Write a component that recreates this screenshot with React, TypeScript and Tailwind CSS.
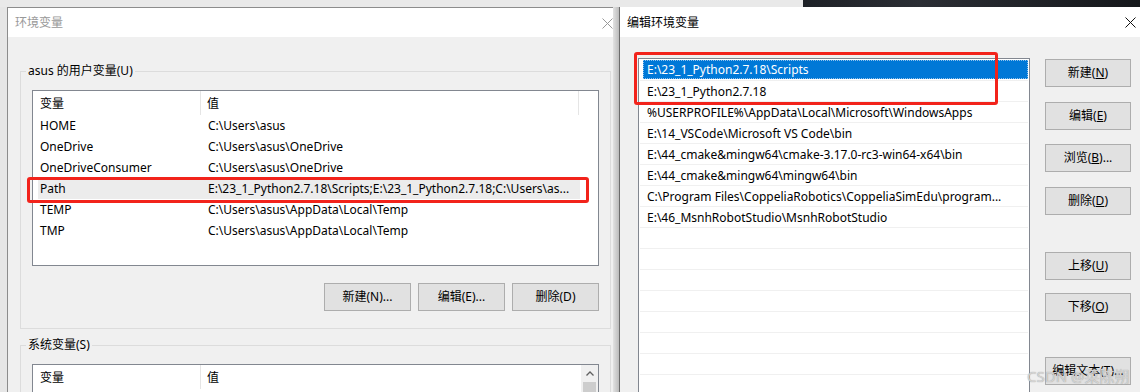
import type { ReactNode } from "react"

const userVars = [
  { name: "HOME", value: "C:\\Users\\asus" },
  { name: "OneDrive", value: "C:\\Users\\asus\\OneDrive" },
  { name: "OneDriveConsumer", value: "C:\\Users\\asus\\OneDrive" },
  { name: "Path", value: "E:\\23_1_Python2.7.18\\Scripts;E:\\23_1_Python2.7.18;C:\\Users\\as...", active: true },
  { name: "TEMP", value: "C:\\Users\\asus\\AppData\\Local\\Temp" },
  { name: "TMP", value: "C:\\Users\\asus\\AppData\\Local\\Temp" },
]

const pathEntries = [
  "E:\\23_1_Python2.7.18\\Scripts",
  "E:\\23_1_Python2.7.18",
  "%USERPROFILE%\\AppData\\Local\\Microsoft\\WindowsApps",
  "E:\\14_VSCode\\Microsoft VS Code\\bin",
  "E:\\44_cmake&mingw64\\cmake-3.17.0-rc3-win64-x64\\bin",
  "E:\\44_cmake&mingw64\\mingw64\\bin",
  "C:\\Program Files\\CoppeliaRobotics\\CoppeliaSimEdu\\program...",
  "E:\\46_MsnhRobotStudio\\MsnhRobotStudio",
  "", "", "", "", "", "", "", "", "",
]

function CloseX({ color }: { color: string }) {
  return (
    <svg width="11" height="11" viewBox="0 0 11 11">
      <path d="M0.5 0.5L10.5 10.5M10.5 0.5L0.5 10.5" stroke={color} strokeWidth="1" />
    </svg>
  )
}

function Btn({ children, className = "" }: { children: ReactNode; className?: string }) {
  return (
    <button
      className={`flex h-[28px] shrink-0 items-center justify-center border border-[#adadad] bg-[#e1e1e1] text-[12px] text-black ${className}`}
    >
      {children}
    </button>
  )
}

function GroupLabel({ children }: { children: ReactNode }) {
  return (
    <span className="absolute left-[5px] top-[-9px] bg-[#f0f0f0] px-[2px] leading-[16px]">
      {children}
    </span>
  )
}

export default function App() {
  return (
    <div className="relative h-[392px] w-[1140px] overflow-hidden bg-[linear-gradient(to_right,#e9e9e9_803px,#1e2127_803px,#2b2e34_920px,#15171b_1140px)] font-['Noto_Sans','Noto_Sans_CJK_SC',sans-serif] text-[12px] leading-none text-black">
      <div className="flex h-full pt-[7px]">
        <div className="w-[7px] shrink-0 bg-[#e6e6e6]" />

        {/* 环境变量 */}
        <div className="flex w-[606px] shrink-0 flex-col overflow-hidden border-l border-t border-[#8c8c8c]">
          <div className="flex h-[29px] shrink-0 items-center justify-between bg-white pl-[7px] pt-[1px]">
            <span className="text-[#999999]">环境变量</span>
            <CloseX color="#999999" />
          </div>
          <div className="flex-1 bg-[#f0f0f0] pl-[12px] pt-[34px]">
            <div className="relative h-[258px] w-[591px] border border-[#dcdcdc] pl-[11px] pt-[18px]">
              <GroupLabel>asus 的用户变量(U)</GroupLabel>
              <div className="h-[176px] w-[567px] border border-[#828790] bg-white">
                <div className="flex h-[24px]">
                  <div className="flex w-[168px] items-center border-r border-[#e5e5e5] pl-[7px] pt-[2px]">变量</div>
                  <div className="flex w-[378px] items-center border-r border-[#e5e5e5] pl-[6px] pt-[2px]">值</div>
                </div>
                <div className="ml-[5px] w-[542px]">
                  {userVars.map((v) => (
                    <div
                      key={v.name}
                      className={`flex h-[21px] items-center whitespace-nowrap pt-[1px] ${v.active ? "bg-[#ececec]" : ""}`}
                    >
                      <div className="w-[163px] pl-[2px]">{v.name}</div>
                      <div className="pl-[7px]">{v.value}</div>
                    </div>
                  ))}
                </div>
              </div>
              <div className="mt-[17px] flex w-[567px] justify-end gap-[7px]">
                <Btn className="w-[87px]">新建(N)...</Btn>
                <Btn className="w-[87px]">编辑(E)...</Btn>
                <Btn className="w-[87px]">删除(D)</Btn>
              </div>
            </div>

            <div className="relative mt-[16px] h-[200px] w-[591px] border border-[#dcdcdc] pl-[11px] pt-[18px]">
              <GroupLabel>系统变量(S)</GroupLabel>
              <div className="flex h-[120px] w-[567px] border border-[#828790] bg-white">
                <div className="flex h-[24px] flex-1">
                  <div className="flex w-[168px] items-center border-r border-[#e5e5e5] pl-[7px] pt-[2px]">变量</div>
                  <div className="flex items-center pl-[6px] pt-[2px]">值</div>
                </div>
                <div className="flex w-[17px] flex-col bg-[#f0f0f0]">
                  <div className="flex h-[17px] items-center justify-center">
                    <svg width="8" height="5" viewBox="0 0 8 5">
                      <path d="M0.5 4.5L4 1L7.5 4.5" fill="none" stroke="#606060" strokeWidth="1.3" />
                    </svg>
                  </div>
                  <div className="mx-[2px] flex-1 bg-[#cdcdcd]" />
                </div>
              </div>
            </div>
          </div>
        </div>

        <div className="w-[6px] shrink-0 bg-gradient-to-r from-[#e2e2e2] to-[#bcbcbc]" />

        {/* 编辑环境变量 */}
        <div className="flex flex-1 flex-col border-l border-[#6c6c6c]">
          <div className="flex h-[30px] shrink-0 items-center justify-between bg-white pl-[7px] pr-[4px] pt-[1px]">
            <span>编辑环境变量</span>
            <CloseX color="#111111" />
          </div>
          <div className="flex flex-1 bg-[#f0f0f0] pl-[18px] pt-[21px]">
            <div className="h-[400px] w-[392px] shrink-0 border border-[#828790] bg-white px-[1px]">
              {pathEntries.map((p, i) => (
                <div key={i} className="h-[21px] border-b border-[#f0f0f0]">
                  {i === 0 ? (
                    <div className="ml-[3px] mt-[1px] flex h-[19px] items-center whitespace-nowrap bg-[#0078d7] pl-[4px] pt-[1px] text-white outline-1 -outline-offset-1 outline-dotted outline-[#8fc2ee]">
                      {p}
                    </div>
                  ) : (
                    <div className="flex h-full items-center whitespace-nowrap pl-[7px] pt-[2px]">{p}</div>
                  )}
                </div>
              ))}
            </div>
            <div className="ml-[15px] flex w-[86px] flex-col">
              <Btn className="mt-[1px] w-[86px]">新建(<u>N</u>)</Btn>
              <Btn className="mt-[15px] w-[86px]">编辑(<u>E</u>)</Btn>
              <Btn className="mt-[14px] w-[86px]">浏览(<u>B</u>)...</Btn>
              <Btn className="mt-[15px] w-[86px]">删除(<u>D</u>)</Btn>
              <Btn className="mt-[37px] w-[86px]">上移(<u>U</u>)</Btn>
              <Btn className="mt-[13px] w-[86px]">下移(<u>O</u>)</Btn>
              <Btn className="mt-[36px] w-[86px]">编辑文本(<u>T</u>)...</Btn>
            </div>
          </div>
        </div>
      </div>

      <div className="pointer-events-none absolute left-[27px] top-[177px] h-[26px] w-[562px] rounded-[3px] border-[3px] border-[#f2231b]" />
      <div className="pointer-events-none absolute left-[634px] top-[52px] h-[53px] w-[364px] rounded-[3px] border-[3px] border-[#f2231b]" />

      <div className="pointer-events-none absolute left-[1027px] top-[367px] whitespace-nowrap text-[15px] leading-[18px] text-[#e2e2e2]/80 [text-shadow:0_0_1px_#8a8a8a]">
        CSDN @菜陈朔
      </div>
    </div>
  )
}
